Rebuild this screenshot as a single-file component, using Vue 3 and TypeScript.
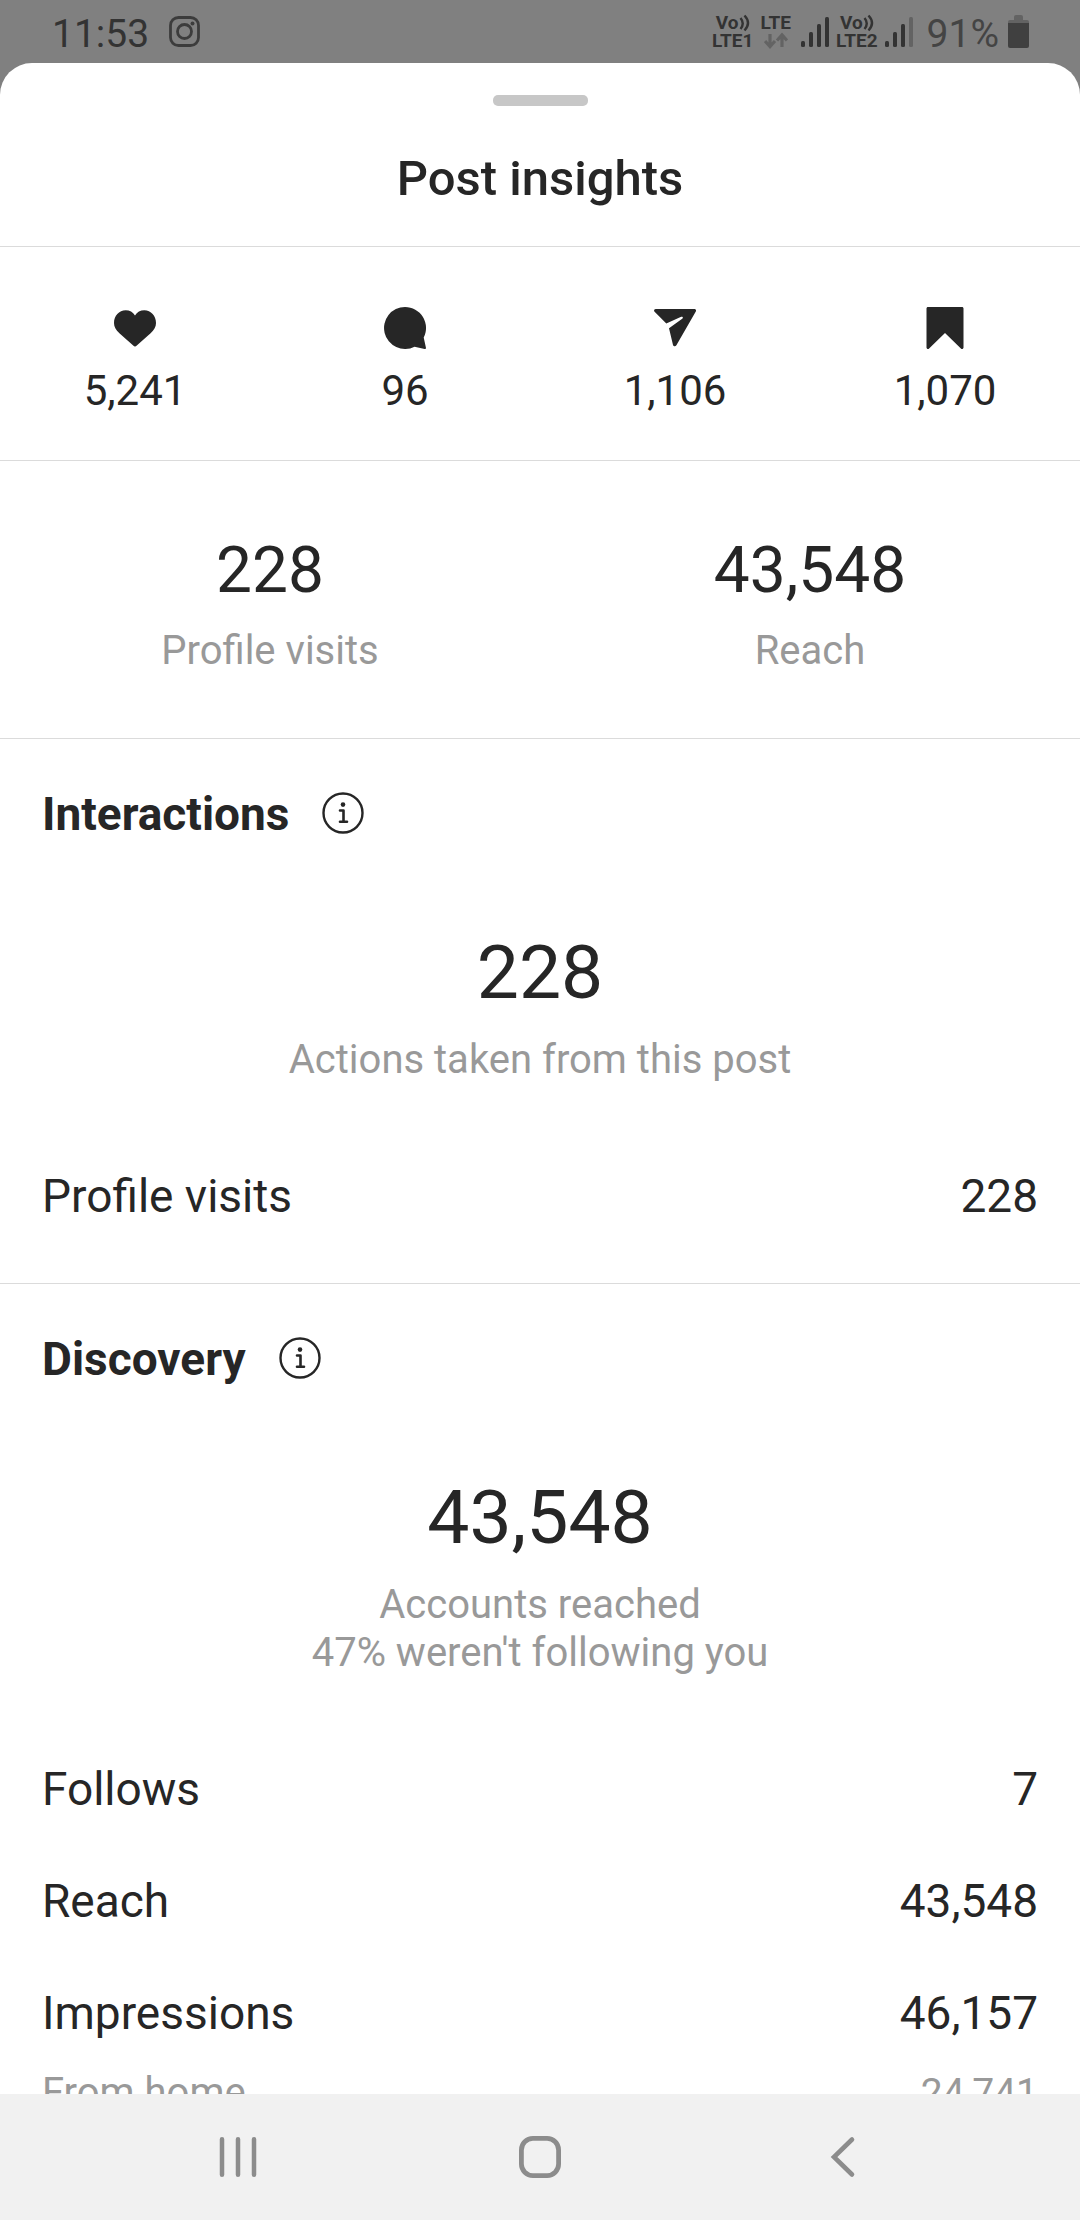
<script setup lang="ts">
interface Metric {
  label: string
  value: string
}

interface EngagementStat extends Metric {
  icon: string
}

interface DetailRow extends Metric {
  minor?: boolean
}

interface InsightSection {
  title: string
  total: string
  captions: string[]
  rows: DetailRow[]
}

const engagement: EngagementStat[] = [
  {
    label: 'Likes',
    value: '5,241',
    icon: 'M21 39.6c-.7 0-1.2-.5-1.8-1L5.4 26.2C1.8 22.9 0 19.7 0 15.9 0 8.9 5 3.3 11.7 3.3c4 0 7.2 1.8 9.3 5.1 2.1-3.3 5.3-5.1 9.3-5.1C37 3.3 42 8.9 42 15.9c0 3.8-1.8 7-5.4 10.3L22.8 38.6c-.6.5-1.1 1-1.8 1z'
  },
  {
    label: 'Comments',
    value: '96',
    icon: 'M21 0a21 21 0 1 0 9.6 39.7l10 2.2c.9.2 1.5-.4 1.3-1.3l-2.2-10A21 21 0 0 0 21 0z'
  },
  {
    label: 'Shares',
    value: '1,106',
    icon: 'M1.7 2h38.6c1.4 0 2.2 1.4 1.5 2.6L22.4 38.3c-.9 1.5-3 1.2-3.400-.4l-4-16.600 13.200-9.500c1.300-1 .5-2.600-1-2L12.300 16.500.6 4.800C-.5 3.700.2 2 1.700 2z'
  },
  {
    label: 'Saves',
    value: '1,070',
    icon: 'M4 0h34c.9 0 1.5.6 1.5 1.5v39c0 1.4-1.6 2-2.6 1L21 26 5.1 41.5c-1 1-2.6.4-2.6-1v-39C2.5.6 3.1 0 4 0z'
  }
]

const highlights: Metric[] = [
  { label: 'Profile visits', value: '228' },
  { label: 'Reach', value: '43,548' }
]

const sections: InsightSection[] = [
  {
    title: 'Interactions',
    total: '228',
    captions: ['Actions taken from this post'],
    rows: [{ label: 'Profile visits', value: '228' }]
  },
  {
    title: 'Discovery',
    total: '43,548',
    captions: ['Accounts reached', "47% weren't following you"],
    rows: [
      { label: 'Follows', value: '7' },
      { label: 'Reach', value: '43,548' },
      { label: 'Impressions', value: '46,157' },
      { label: 'From home', value: '24,741', minor: true }
    ]
  }
]

const sims = [
  { name: 'LTE1', data: true, weak: false },
  { name: 'LTE2', data: false, weak: true }
]
</script>

<template>
  <div class="screen">
    <header class="status">
      <div class="status-side">
        <span class="clock">11:53</span>
        <svg class="insta" viewBox="0 0 31 31" fill="none" stroke="currentColor" aria-hidden="true">
          <rect x="1.5" y="1.5" width="28" height="28" rx="8" stroke-width="2.8" />
          <circle cx="15.5" cy="15.5" r="7" stroke-width="2.8" />
          <circle cx="23.5" cy="7.5" r="2" fill="currentColor" stroke="none" />
        </svg>
      </div>
      <div class="status-side">
        <template v-for="sim in sims" :key="sim.name">
          <div class="carrier">
            <span class="volte">
              <span>Vo</span>
              <svg class="waves" viewBox="0 0 11 18" fill="none" stroke="currentColor" stroke-width="2.4" aria-hidden="true">
                <path d="M1.500 4q4.500 5.500 0 11M5.500 1.500q7 7.500 0 15" />
              </svg>
            </span>
            <span>{{ sim.name }}</span>
          </div>
          <div v-if="sim.data" class="carrier network">
            <span>LTE</span>
            <svg class="arrows" viewBox="0 0 24 18" fill="none" stroke="currentColor" stroke-width="3.2" aria-hidden="true">
              <path d="M6 2v12M1 9l5 5.500L11 9M18 15V4M13 8.500L18 3l5 5.500" />
            </svg>
          </div>
          <svg class="signal" viewBox="0 0 28 30" fill="currentColor" aria-hidden="true">
            <rect x="0" y="24" width="4" height="6" rx="1.5" />
            <rect x="8" y="15" width="4" height="15" rx="1.5" />
            <rect x="16" y="7" width="4" height="23" rx="1.5" />
            <rect x="24" y="0" width="4" height="30" rx="1.5" :class="{ faded: sim.weak }" />
          </svg>
        </template>
        <span class="percent">91%</span>
        <svg class="battery" viewBox="0 0 21 33" aria-hidden="true">
          <path fill="#636363" d="M6 2q0-2 2-2h5q2 0 2 2v3h4q2 0 2 2v2H0V7q0-2 2-2h4z" />
          <path fill="#404040" d="M0 8h21v23q0 2-2 2H2q-2 0-2-2z" />
        </svg>
      </div>
    </header>

    <main class="sheet">
      <div class="title-bar">
        <div class="handle"></div>
        <h1>Post insights</h1>
      </div>

      <div class="content">
        <ul class="engagement">
          <li v-for="stat in engagement" :key="stat.label" :aria-label="stat.label">
            <svg viewBox="0 0 42 42" fill="currentColor" aria-hidden="true"><path :d="stat.icon" /></svg>
            <span>{{ stat.value }}</span>
          </li>
        </ul>

        <div class="highlights">
          <div v-for="item in highlights" :key="item.label">
            <strong>{{ item.value }}</strong>
            <span class="caption">{{ item.label }}</span>
          </div>
        </div>

        <section v-for="section in sections" :key="section.title">
          <div class="heading">
            <h2>{{ section.title }}</h2>
            <button type="button" class="info" :aria-label="`About ${section.title}`">
              <svg viewBox="0 0 42 42" fill="none" stroke="currentColor" aria-hidden="true">
                <circle cx="21" cy="21" r="19.5" stroke-width="2.4" />
                <path d="M18 18.500h3.500v11M18 29.800h7" stroke-width="2.6" stroke-linecap="round" stroke-linejoin="round" />
                <circle cx="21" cy="12.6" r="2.3" fill="currentColor" stroke="none" />
              </svg>
            </button>
          </div>
          <p class="total">{{ section.total }}</p>
          <p v-for="line in section.captions" :key="line" class="caption">{{ line }}</p>
          <dl>
            <div v-for="row in section.rows" :key="row.label" class="row" :class="{ minor: row.minor }">
              <dt>{{ row.label }}</dt>
              <dd>{{ row.value }}</dd>
            </div>
          </dl>
        </section>
      </div>
    </main>

    <nav class="system-nav" aria-label="System navigation">
      <button type="button" aria-label="Recent apps">
        <svg viewBox="0 0 42 42" fill="none" stroke="currentColor" stroke-width="4.5" stroke-linecap="round">
          <path d="M5 3.200v35.600M21 3.200v35.600M37 3.200v35.600" />
        </svg>
      </button>
      <button type="button" aria-label="Home">
        <svg viewBox="0 0 42 42" fill="none" stroke="currentColor" stroke-width="4.8">
          <rect x="2.4" y="2.4" width="37.2" height="37.2" rx="11.5" />
        </svg>
      </button>
      <button type="button" aria-label="Back">
        <svg viewBox="0 0 42 42" fill="none" stroke="currentColor" stroke-width="4.6" stroke-linecap="round">
          <path d="M31 3.500L13 21l18 17.500" />
        </svg>
      </button>
    </nav>
  </div>
</template>

<style>
body {
  margin: 0;
  background: #808080;
}
</style>

<style scoped>
.screen {
  display: flex;
  flex-direction: column;
  height: 100vh;
  background: #808080;
  color: #262626;
  font-family: Roboto, "Liberation Sans", sans-serif;
}

h1,
h2,
p,
ul,
dl,
dd {
  margin: 0;
  padding: 0;
}

button {
  padding: 0;
  border: 0;
  background: none;
  color: inherit;
}

svg {
  display: block;
}

.status {
  display: flex;
  flex: none;
  justify-content: space-between;
  height: 63px;
  padding: 0 51px 0 52px;
  color: #333;
}

.status-side {
  display: flex;
  align-items: center;
}

.clock,
.percent {
  padding-top: 4px;
  font-size: 39px;
  line-height: 46px;
}

.percent {
  margin: 0 9px 0 7px;
  color: #444;
}

.insta {
  width: 31px;
  height: 31px;
  margin-left: 20px;
  color: #3c3c3c;
}

.carrier {
  display: flex;
  flex-direction: column;
  align-items: center;
  margin-right: 7px;
  font-size: 19px;
  font-weight: 700;
  line-height: 18px;
}

.volte {
  display: flex;
}

.waves {
  width: 11px;
  height: 18px;
}

.network {
  margin-right: 10px;
}

.arrows {
  width: 24px;
  height: 18px;
  color: #636363;
}

.signal {
  width: 28px;
  height: 30px;
  margin-right: 7px;
}

.faded {
  fill: #636363;
}

.battery {
  width: 21px;
  height: 33px;
}

.sheet {
  display: flex;
  flex: 1;
  flex-direction: column;
  min-height: 0;
  border-radius: 32px 32px 0 0;
  background: #fff;
  overflow: hidden;
}

.title-bar {
  padding: 32px 42px 39px;
  border-bottom: 1px solid #dbdbdb;
  text-align: center;
}

.handle {
  width: 95px;
  height: 11px;
  margin: 0 auto 45px;
  border-radius: 5px;
  background: #c7c7c7;
}

h1 {
  font-size: 49px;
  font-weight: 500;
  line-height: 56px;
}

.content {
  flex: 1;
  min-height: 0;
  overflow-y: auto;
  scrollbar-width: none;
}

.engagement {
  display: grid;
  grid-template-columns: repeat(4, 1fr);
  padding: 60px 0 44px;
  border-bottom: 1px solid #dbdbdb;
  list-style: none;
}

.engagement li {
  display: flex;
  flex-direction: column;
  align-items: center;
  gap: 17px;
  font-size: 42px;
  line-height: 50px;
}

.engagement svg {
  width: 42px;
  height: 42px;
}

.highlights {
  display: grid;
  grid-template-columns: repeat(2, 1fr);
  padding: 73px 0 63px;
}

.highlights > div {
  display: flex;
  flex-direction: column;
  gap: 19px;
}

.highlights strong {
  font-size: 64px;
  font-weight: 400;
  line-height: 74px;
  text-align: center;
}

.caption {
  color: #999;
  font-size: 40px;
  line-height: 48px;
  text-align: center;
}

section {
  padding: 48px 42px 31px;
  border-top: 1px solid #dbdbdb;
}

.heading {
  display: flex;
  align-items: flex-start;
  gap: 33px;
  margin-bottom: 87px;
}

h2 {
  font-size: 46px;
  font-weight: 700;
  line-height: 54px;
}

.info {
  padding-top: 5px;
}

.info svg {
  width: 42px;
  height: 42px;
}

.total {
  margin-bottom: 20px;
  font-size: 75px;
  line-height: 88px;
  text-align: center;
}

dl {
  margin-top: 56px;
}

.row {
  display: flex;
  justify-content: space-between;
  font-size: 46px;
  line-height: 112px;
}

.minor {
  color: #999;
  font-size: 40px;
  line-height: 48px;
}

.minor dd {
  font-size: 39px;
}

.system-nav {
  display: flex;
  flex: none;
  justify-content: center;
  height: 126px;
  background: #f1f1f1;
  color: #8c8c8c;
}

.system-nav button {
  display: flex;
  align-items: center;
  justify-content: center;
  width: 28%;
}

.system-nav svg {
  width: 42px;
  height: 42px;
}
</style>
